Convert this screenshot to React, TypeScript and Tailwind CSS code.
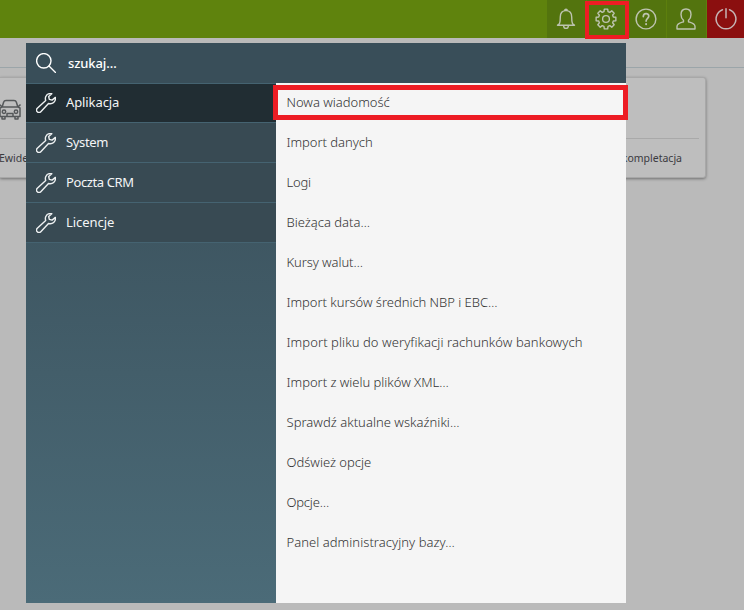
import type { ReactNode } from 'react';

function Icon({ children, size = 20, vb = '0 0 20 20', sw = 1.2, className = '' }: { children: ReactNode; size?: number; vb?: string; sw?: number; className?: string }) {
  return (
    <svg width={size} height={size} viewBox={vb} fill="none" stroke="currentColor" strokeWidth={sw} strokeLinejoin="round" strokeLinecap="round" className={'shrink-0 ' + className}>
      {children}
    </svg>
  );
}

const Bell = () => (
  <Icon size={22} vb="0 0 22 22" sw={1.4}>
    <path d="M2.5 17.2h17M4.6 15.3c-.3.8-1.3 1.4-2.1 1.9M17.4 15.3c.3.8 1.3 1.4 2.1 1.9M4.6 15.3c.7-1.7.7-4 .7-6.3C5.3 5.2 7.5 2.600 11 2.600s5.700 2.600 5.700 6.400c0 2.300 0 4.600.7 6.300M9.700 2.700c0-2 2.600-2 2.600 0M8.600 17.400c0 4 4.800 4 4.800 0" />
  </Icon>
);

function gearPath() {
  const points: string[] = [];
  for (let i = 0; i < 8; i++) {
    const a = (i * Math.PI) / 4 - Math.PI / 2;
    [[-0.27, 7.6], [-0.17, 10], [0.17, 10], [0.27, 7.6]].forEach(([d, r]) => {
      points.push(`${(11 + r * Math.cos(a + d)).toFixed(2)} ${(11 + r * Math.sin(a + d)).toFixed(2)}`);
    });
  }
  return 'M' + points.join('L') + 'Z';
}

const Gear = () => (
  <Icon size={22} vb="0 0 22 22" sw={1.4}>
    <path d={gearPath()} />
    <circle cx="11" cy="11" r="3.4" />
  </Icon>
);

const Help = () => (
  <Icon size={22} vb="0 0 22 22" sw={1.4}>
    <circle cx="11" cy="11" r="9.900" />
    <path strokeWidth="1.7" d="M8.300 8.600c0-3.800 5.500-3.800 5.500-.5 0 2.300-2.700 2.200-2.700 5" />
    <path strokeWidth="1.900" d="M11.100 16v.3" />
  </Icon>
);

const User = () => (
  <Icon size={22} vb="0 0 22 22" sw={1.4}>
    <path d="M8.500 12.300C6.800 10.800 6 8.500 6 6.400 6 3 8 1 11 1s5 2 5 5.400c0 2.100-.8 4.400-2.500 5.900v1.500c2 .7 6.500 1.400 6.500 4.700V21H2v-2.500c0-3.300 4.500-4 6.500-4.700z" />
  </Icon>
);

const Power = () => (
  <Icon size={22} vb="0 0 22 22" sw={1.5}>
    <path d="M7.500 1.700a9.900 9.900 0 1 0 7 0M11 .8v9" />
  </Icon>
);

const Wrench = () => (
  <Icon className="text-[#eef1f2]" sw={1.4}>
    <path d="M15.800.8c-2.300-.5-5 .5-6 2.700-.6 1.300-.5 2.800-.1 4L1.300 15.200c-2.400 2.500 1.200 5.900 3.500 3.500l7.700-8.200c3.900 1.200 7.600-1.900 6.900-6.100l-3.300 2.700-2.800-.7-.6-2.900z" />
  </Icon>
);

const Car = () => (
  <svg width="23" height="22" viewBox="0 0 23 22" fill="none" stroke="currentColor" strokeWidth="1.500" strokeLinejoin="round" className="absolute -left-px top-[21px] text-[#55585a]">
    <path d="M3 8.500 4.600 3.300C5 2 5.700 1.500 7 1.500h8c1.300 0 2 .5 2.400 1.800L19 8.500M1 9l2-1h16l2 1v8.500H1zM3 17.500V20h3v-2.500M16 17.500V20h3v-2.500M3 8 .5 5.500M19 8l2.500-2.500M8 17.500v-3h6v3" />
    <circle cx="5" cy="12.700" r="1.700" />
    <circle cx="17" cy="12.700" r="1.700" />
  </svg>
);

const categories = [
  { label: 'Aplikacja', cls: 'tracking-[-0.100px]' },
  { label: 'System', cls: 'tracking-[-0.340px]' },
  { label: 'Poczta CRM', cls: 'tracking-[-0.400px]' },
  { label: 'Licencje', cls: 'tracking-[-0.060px]' },
];

const options = [
  { label: 'Nowa wiadomość', cls: 'tracking-[-0.010px]' },
  { label: 'Import danych', cls: 'tracking-[-0.030px]' },
  { label: 'Logi', cls: 'tracking-[-0.200px]' },
  { label: 'Bieżąca data…', cls: 'tracking-[0.000px]' },
  { label: 'Kursy walut…', cls: 'tracking-[-0.080px]' },
  { label: 'Import kursów średnich NBP i EBC…', cls: 'tracking-[-0.030px]' },
  { label: 'Import pliku do weryfikacji rachunków bankowych', cls: 'tracking-[0.080px]' },
  { label: 'Import z wielu plików XML…', cls: 'tracking-[-0.020px]' },
  { label: 'Sprawdź aktualne wskaźniki…', cls: 'tracking-[0.030px]' },
  { label: 'Odśwież opcje', cls: 'tracking-[-0.010px]' },
  { label: 'Opcje…', cls: 'tracking-[-0.200px]' },
  { label: 'Panel administracyjny bazy…', cls: 'tracking-[0.050px]' },
];

export default function App() {
  return (
    <div className="relative h-[610px] w-[744px] overflow-hidden bg-[#bababa] font-['Noto_Sans','Open_Sans',sans-serif]">
      <header className="flex h-[38px] justify-end bg-[#5f830d] text-[#bdc3b0]">
        {[Bell, Gear, Help, User].map((Glyph, i) => (
          <button key={i} className="flex w-10 items-center justify-center border-r border-[#5d7f0d] bg-[#53740e] pr-px">
            <Glyph />
          </button>
        ))}
        <button className="flex w-[37px] items-center justify-center bg-[#8b0f0f] text-[#c5b5b5]"><Power /></button>
      </header>

      <main>
        <div className="h-[30px] border-b border-[#9ba5a9]" />
        <section className="relative mt-[9px] h-[101px] w-[706px] rounded-r-[3px] border border-l-0 border-[#a8a8a8] bg-[#bebebe] pr-[6px] shadow-[0_1px_3px_rgba(0,0,0,0.4)]">
          <Car />
          <div className="h-[61px] border-b border-[#a9a9a9]" />
          <div className="flex h-[38px] items-center justify-between pr-[17px] pt-px text-[10.500px] text-[#3b3b3f]">
            <span className="-ml-px">Ewidencja</span>
            <span>Dekompletacja</span>
          </div>
        </section>
      </main>

      <div className="absolute left-[26px] top-[43px] flex h-[560px] w-[600px] flex-col bg-[#f5f5f5]">
        <div className="flex h-10 items-center bg-[#394e59] pl-[10px] text-white">
          <Icon sw={1.400}><circle cx="7.800" cy="7.800" r="7.200" /><path d="m13 13 6.500 6.500" /></Icon>
          <span className="ml-3 pt-px text-[13px] font-medium leading-[39px] tracking-[-0.100px]">szukaj…</span>
        </div>
        <div className="flex flex-1">
          <nav className="w-[250px] bg-linear-to-b from-[#394e59] to-[#4b6b78]">
            {categories.map((c, i) => (
              <div key={c.label} className={'flex h-10 items-center gap-[10px] border-b border-[#456371] pl-[10px] text-[13px] text-[#f4f5f6] ' + (i === 0 ? 'border-t bg-[#212d33]' : 'bg-[#384a53]')}>
                <Wrench />
                <span className={c.cls}>{c.label}</span>
              </div>
            ))}
          </nav>
          <ul className="flex-1 text-[13px] font-light text-[#333]">
            {options.map((o) => (
              <li key={o.label} className="flex h-10 items-center whitespace-nowrap pl-[10.500px]"><span className={o.cls}>{o.label}</span></li>
            ))}
          </ul>
        </div>
      </div>

      <div className="absolute left-[585px] top-px h-[38px] w-[44px] border-[4px] border-[#ed1c24]" />
      <div className="absolute left-[273px] top-[85px] h-[35px] w-[355px] border-[5px] border-[#ed1c24]" />
    </div>
  );
}
